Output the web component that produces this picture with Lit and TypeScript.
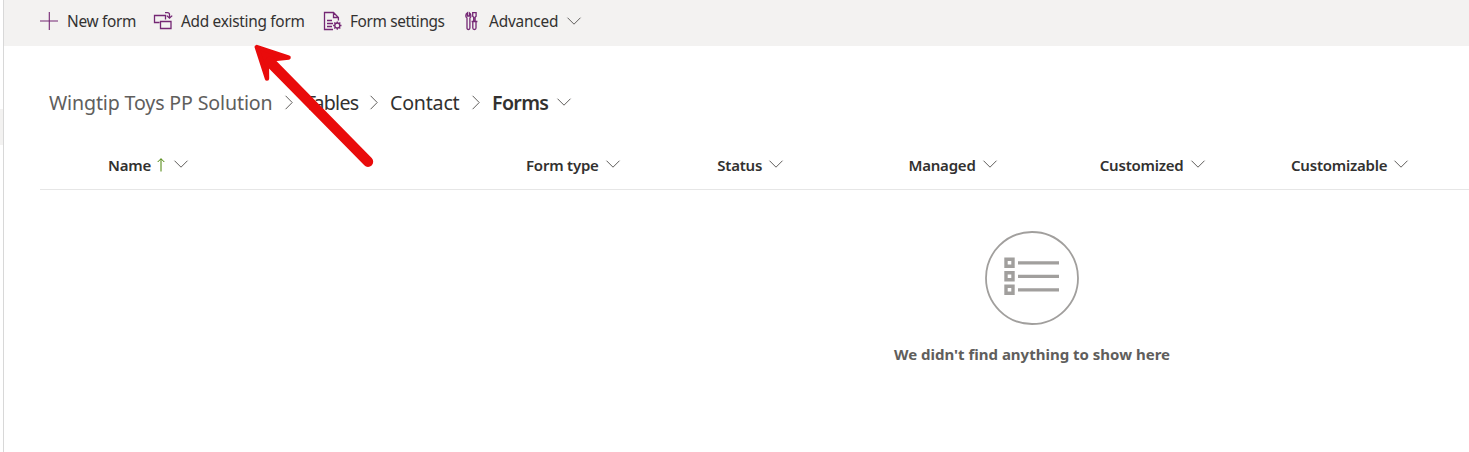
import { LitElement, html, css, svg } from "lit";
import { customElement } from "lit/decorators.js";

const chevronDown = html`<svg class="chev" width="14" height="8" viewBox="0 0 14 8"><path d="M.5 .7 7 7.2 13.5 .7" /></svg>`;
const chevronRight = html`<svg class="chev" width="8" height="15" viewBox="0 0 8 15"><path d="M.6 .8 7.2 7.5 .6 14.2" /></svg>`;

const icons = {
  add: svg`<path stroke-width="1.1" d="M9.3 0V18M0 9H18" />`,
  link: svg`<path d="M6.5 10.5H1.5V3.5H12.5V7.5M7.5 9.5H18V16.5H7.5ZM12 .6H14.4Q16.5 .6 16.5 2.5V6M13.8 3.6 16.5 6.2 19.2 3.6" />`,
  page: svg`<path d="M9 17.5H.5V.5H9.5L14.4 5.5V8.5M9.5 .5V5.5H14.4M3 8.5H8M3 11.5H9M3 14.5H8" /><circle cx="13.3" cy="13.5" r="2.5" /><path d="M13.3 9.5v1.5M13.3 16v1.7M9.1 13.5h1.7M15.8 13.5h1.7M10.3 10.5l1.2 1.2M15.1 15.3l1.2 1.2M10.3 16.5l1.2-1.2M15.1 11.7l1.2-1.2" />`,
  tools: svg`<path d="M3.4 .7V4H5.4V.7Q7 1.6 6.9 4.2 6.8 5.4 5.9 6V16Q5.9 17.5 4.5 17.5 3 17.5 3 16V6Q1.9 5.4 1.8 4 1.7 1.6 3.4 .7ZM8.7 .6H12.1V4.2L11.1 5.2V9.4H9.7V5.2L8.7 4.2ZM7.6 9.5H13.4M8.8 9.5V16Q8.8 17.5 10.4 17.5 12 17.5 12 16V9.5" />`,
};

const commands = [
  { key: "new", label: "New form", icon: icons.add },
  { key: "existing", label: "Add existing form", icon: icons.link },
  { key: "settings", label: "Form settings", icon: icons.page },
  { key: "advanced", label: "Advanced", icon: icons.tools },
];

const columns = ["Name", "Form type", "Status", "Managed", "Customized", "Customizable"];

@customElement("app-root")
export class AppRoot extends LitElement {
  static styles = css`
    :host {
      display: flex;
      position: relative;
      height: 452px;
      overflow: hidden;
      background: #fff;
      color: #323130;
      font-family: "Noto Sans", "Open Sans", sans-serif;
      font-size: 15.4px;
      line-height: 22px;
      white-space: nowrap;
    }
    svg { display: block; flex: none; fill: none; overflow: visible; }
    .rail { box-sizing: border-box; width: 4px; border-right: 1px solid #d8d8d8; padding-top: 109px; flex: none; }
    .selected { height: 36px; background: #f3f2f1; }
    main { flex: 1; min-width: 0; }
    .bar { display: flex; height: 46px; box-sizing: border-box; padding: 0 0 4px 36px; background: #f3f2f1; align-items: center; }
    .cmd { display: flex; align-items: center; flex: none; }
    .cmd > .icon { stroke: #742774; stroke-width: 1.3; }
    .new { width: 113px; }
    .existing { width: 171px; }
    .settings { width: 140px; }
    .cmd .label { margin-left: 9px; padding-top: 2px; }
    .existing .label { margin-left: 10px; }
    .settings .label, .advanced .label { margin-left: 8px; }
    .new .label { letter-spacing: -0.3px; }
    .existing .label { letter-spacing: -0.29px; }
    .settings .label { letter-spacing: -0.38px; }
    .advanced .label { margin-left: 7px; letter-spacing: -0.2px; }
    .chev { stroke: #605e5c; stroke-width: 1; }
    .cmd .chev { margin-left: 9px; }
    .crumbs { display: flex; align-items: center; margin: 43px 0 0 45px; height: 28px; font-size: 19.6px; line-height: 28px; }
    .crumb { flex: none; }
    .crumbs .chev { margin: -1px 12px 0; }
    .root { color: #605e5c; width: 224px; letter-spacing: -0.14px; }
    .tables { width: 53px; letter-spacing: -0.75px; }
    .contact { width: 70px; letter-spacing: -0.2px; }
    .forms { width: 57px; font-weight: 600; letter-spacing: -0.65px; }
    .crumbs .last { margin: -2px 0 0 8px; }
    .head { display: grid; grid-template-columns: 418px repeat(5, 191.25px); box-sizing: border-box; height: 73px; margin-left: 36px; padding: 37px 0 0 68px; border-bottom: 1px solid #e6e6e6; font-weight: 600; font-size: 15px; letter-spacing: -0.22px; }
    .col { display: flex; height: 22px; align-items: center; }
    .col .chev { margin: -3px 0 0 7px; }
    .sort { stroke: #498205; margin-left: 6px; }
    .col .sort + .chev { margin-left: 9px; }
    .empty { display: flex; flex-direction: column; align-items: center; width: 874px; margin: 41px 0 0 591px; color: #605e5c; font-weight: 700; font-size: 15px; }
    .none { margin-top: 18px; }
    .pointer { position: absolute; left: 240px; top: 30px; fill: #e90b0b; stroke: #e90b0b; stroke-linejoin: round; stroke-linecap: round; }
  `;

  render() {
    return html`
      <div class="rail"><div class="selected"></div></div>
      <main>
        <div class="bar">
          ${commands.map((c) => html`<div class="cmd ${c.key}">
            <svg class="icon" width="18" height="18" viewBox="0 0 18 18">${c.icon}</svg>
            <span class="label">${c.label}</span>${c.key === "advanced" ? chevronDown : ""}
          </div>`)}
        </div>
        <nav class="crumbs">
          <span class="crumb root">Wingtip Toys PP Solution</span>${chevronRight}
          <span class="crumb tables">Tables</span>${chevronRight}
          <span class="crumb contact">Contact</span>${chevronRight}
          <span class="crumb forms">Forms</span>
          <svg class="chev last" width="14" height="8" viewBox="0 0 14 8"><path d="M.5 .7 7 7.2 13.5 .7" /></svg>
        </nav>
        <div class="head">
          ${columns.map((name, i) => html`<div class="col"><span>${name}</span>${i === 0
            ? html`<svg class="sort" width="8" height="14" viewBox="0 0 8 14"><path d="M4 13.5V.8M.7 4 4 .7 7.3 4" /></svg>`
            : ""}${chevronDown}</div>`)}
        </div>
        <div class="empty">
          <svg width="94" height="94" viewBox="0 0 94 94" stroke="#a19f9d">
            <circle cx="47" cy="47" r="46" stroke-width="1.8" />
            <path stroke-width="3.2" d="M33 31.8H74M33 45.3H74M33 58.8H74" />
            <path stroke-width="3.4" d="M21 28.3h7v7h-7zM21 41.8h7v7h-7zM21 55.3h7v7h-7z" />
          </svg>
          <div class="none">We didn't find anything to show here</div>
        </div>
      </main>
      <svg class="pointer" width="140" height="140" viewBox="0 0 140 140">
        <path stroke-width="4.4" d="M16.8 17 48.6 27.6 34.5 29 26.9 36.5 27 48.6Z" />
        <path stroke-width="10.4" d="M30 32 128 131.7" />
      </svg>
    `;
  }
}
